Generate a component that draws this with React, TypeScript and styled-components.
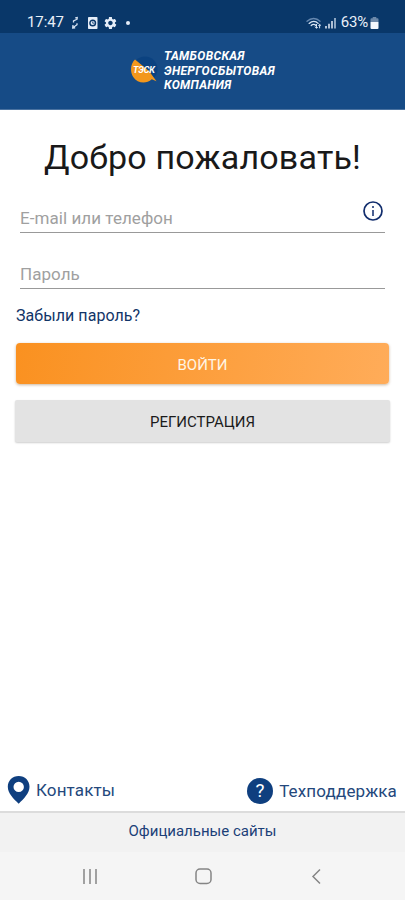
import React from 'react';
import styled, { createGlobalStyle } from 'styled-components';

const GlobalStyle = createGlobalStyle`
  * { box-sizing: border-box; }
  body { margin: 0; background: #fff; font-family: Roboto, "Noto Sans", sans-serif; }
  button, input { font-family: inherit; }
`;

const Screen = styled.div`
  width: 405px;
  height: 900px;
  display: flex;
  flex-direction: column;
  background: #fff;
  overflow: hidden;
`;

const StatusBar = styled.div`
  height: 33px;
  flex: none;
  display: flex;
  justify-content: space-between;
  padding: 11px 26px 0 27px;
  background: #093769;
  color: #e9f0f8;
`;

const StatusGroup = styled.div`
  display: flex;
  height: 23px;
  align-items: center;
`;

const StatusText = styled.span<{ $spacing: number }>`
  font-size: 15px;
  line-height: 23px;
  letter-spacing: ${(p) => p.$spacing}px;
`;

const Spacer = styled.span<{ $width: number }>`
  width: ${(p) => p.$width}px;
  flex: none;
`;

const Header = styled.header`
  height: 77px;
  flex: none;
  display: flex;
  align-items: flex-start;
  padding: 16px 0 0 130px;
  background: #164b86;
  border-bottom: 1px solid #4a72a0;
`;

const Logo = styled.svg`
  width: 30px;
  height: 30px;
  margin: 6px 4px 0 0;
  flex: none;
`;

const CompanyName = styled.div`
  color: #fff;
  font-size: 12px;
  font-weight: 700;
  font-style: italic;
  line-height: 14.7px;
  letter-spacing: 0.34px;
  white-space: nowrap;
`;

const Main = styled.main`
  flex: 1;
  display: flex;
  flex-direction: column;
  padding: 25px 15px 0;
`;

const Title = styled.h1`
  margin: 0 0 1px;
  height: 44px;
  line-height: 44px;
  font-size: 34px;
  font-weight: 400;
  letter-spacing: 0.19px;
  text-align: center;
  color: #191919;
  white-space: nowrap;
`;

const Field = styled.label<{ $height: number }>`
  display: flex;
  align-items: flex-end;
  justify-content: space-between;
  height: ${(p) => p.$height}px;
  margin: 0 5px;
  padding: 0 2px 2px 0;
  border-bottom: 1px solid #999;

  svg { margin-bottom: 9px; flex: none; }
`;

const Input = styled.input`
  flex: 1;
  min-width: 0;
  height: 24px;
  padding: 0;
  border: 0;
  outline: 0;
  background: transparent;
  font-size: 17px;
  letter-spacing: 0.06px;

  &::placeholder { color: #a0a0a0; opacity: 1; }
`;

const ForgotLink = styled.a`
  margin: 15px 0 0 1px;
  height: 24px;
  line-height: 24px;
  font-size: 16px;
  letter-spacing: 0.06px;
  color: #123568;
`;

const LoginButton = styled.button`
  height: 41px;
  margin: 15px 1px 0;
  padding: 2px 0 0;
  border: 0;
  border-radius: 4px;
  background: linear-gradient(100deg, #fa9120, #ffac59);
  box-shadow: 0 1px 3px rgba(120, 70, 10, 0.4);
  color: #fff5e5;
  font-size: 15px;
`;

const RegisterButton = styled.button`
  height: 42px;
  margin-top: 16px;
  padding: 1px 0 0;
  border: 0;
  border-radius: 2px;
  background: #e3e3e3;
  box-shadow: 0 1px 2px rgba(0, 0, 0, 0.2);
  color: #1b1b1b;
  font-size: 15px;
`;

const SupportRow = styled.div`
  flex: none;
  height: 43px;
  display: flex;
  align-items: center;
  justify-content: space-between;
  padding: 0 8px 0 7px;
`;

const SupportLink = styled.a<{ $drop?: number }>`
  display: flex;
  align-items: center;
  gap: 6px;
  padding-top: ${(p) => p.$drop ?? 0}px;
  font-size: 17px;
  line-height: 24px;
  letter-spacing: 0.13px;
  color: #24487c;
`;

const HelpBadge = styled.span`
  display: flex;
  align-items: center;
  justify-content: center;
  width: 26px;
  height: 26px;
  border-radius: 50%;
  background: #0f3f7f;
  color: #fff;
  font-size: 19px;
  line-height: 26px;
`;

const SitesBar = styled.div`
  flex: none;
  height: 41px;
  border-top: 2px solid #dcdcdc;
  background: #f2f2f2;
  color: #1b3f78;
  font-size: 15px;
  line-height: 37px;
  text-align: center;
`;

const NavBar = styled.nav`
  flex: none;
  height: 48px;
  display: flex;
  align-items: center;
  justify-content: space-between;
  padding: 0 79px 0 80px;
  background: #f5f5f5;
`;

const NotificationIcons = () => (
  <svg width="70" height="16" viewBox="0 0 70 16" fill="none">
    <path d="M3.5 7.5V6l3-1.5M5.2 2.8l2-.3-.2 2.2M7 8.2v1.5l-3.5 2.5M3 10l-.3 3 2.5-.2" stroke="#d7e3f2" strokeWidth="1.3" />
    <rect x="18" y="2" width="9.5" height="12" rx=".8" fill="#e5edf8" />
    <circle cx="22.7" cy="8" r="2.8" stroke="#093769" strokeWidth="1.4" />
    <path d="M22.7 6.5v1.7h1.8" stroke="#093769" strokeWidth=".8" />
    <g transform="translate(33 .6) scale(.62)">
      <path
        fill="#e5edf8"
        d="M19.14 12.94c.04-.3.06-.61.06-.94 0-.32-.02-.64-.07-.94l2.03-1.58a.49.49 0 0 0 .12-.61l-1.92-3.32a.488.488 0 0 0-.59-.22l-2.39.96c-.5-.38-1.03-.7-1.62-.94l-.36-2.54a.484.484 0 0 0-.48-.41h-3.84c-.24 0-.43.17-.47.41l-.36 2.54c-.59.24-1.13.57-1.62.94l-2.39-.96c-.22-.08-.47 0-.59.22L2.74 8.87c-.12.21-.08.47.12.61l2.03 1.58c-.05.3-.09.63-.09.94s.02.64.07.94l-2.03 1.58a.49.49 0 0 0-.12.61l1.92 3.32c.12.22.37.29.59.22l2.39-.96c.5.38 1.03.7 1.62.94l.36 2.54c.05.24.24.41.48.41h3.84c.24 0 .44-.17.47-.41l.36-2.54c.59-.24 1.13-.56 1.62-.94l2.39.96c.22.08.47 0 .59-.22l1.92-3.32c.12-.22.07-.47-.12-.61zM12 15.6c-1.98 0-3.6-1.62-3.6-3.6s1.62-3.6 3.6-3.6 3.6 1.62 3.6 3.6-1.62 3.6-3.6 3.6"
      />
    </g>
    <circle cx="58" cy="8" r="2" fill="#e5edf8" />
  </svg>
);

const ConnectionIcons = () => (
  <svg width="32" height="16" viewBox="0 0 32 16" fill="none">
    <g strokeWidth="1.3" strokeLinecap="round">
      <path d="M1 6.2c4-3.6 9.4-3.6 13 0" stroke="#6688b0" />
      <path d="M3.1 8.4c2.9-2.6 6.6-2.6 9 0M5.2 10.5c1.4-1.5 3.5-1.5 4.7 0" stroke="#d7e3f2" />
    </g>
    <path d="M10.5 9v4M9 11.7l1.5 1.7 1.2-1.4M13.6 13.3V9.5M12.3 10.7l1.3-1.4 1.4 1.4" stroke="#d7e3f2" />
    <path d="M20 11v2.5M23 8.7v4.8M26 6v7.5" stroke="#e5edf8" strokeWidth="1.5" />
    <path d="M29 3v10.5" stroke="#b9cce1" strokeWidth="1.5" />
  </svg>
);

const BatteryIcon = () => (
  <svg width="9" height="14" viewBox="0 0 9 14">
    <path d="M.5 6V3.2q0-1 1-1h1.2V1h3.6v1.2h1.2q1 0 1 1V6z" fill="#6d89aa" />
    <path d="M.5 6h8v6q0 1-1 1h-6q-1 0-1-1z" fill="#f3f7fd" />
  </svg>
);

const CompanyLogo = () => (
  <Logo viewBox="0 0 30 30">
    <circle cx="15" cy="14" r="12.5" fill="#0b4280" />
    <path d="M5 4.5C.2 9 0 17 3.2 22c4.300 6.300 12.800 7.500 18.600 2.300l4.700 1.900L19 16 5 4.500z" fill="#f3971c" />
    <text x="3" y="17.5" fill="#fff" fontFamily="Roboto, sans-serif" fontSize="9" fontWeight="700" fontStyle="italic" textLength="22">
      ТЭСК
    </text>
  </Logo>
);

const InfoIcon = () => (
  <svg width="20" height="20" viewBox="0 0 20 20" fill="none" stroke="#112d6d">
    <circle cx="10" cy="10" r="9" strokeWidth="1.7" />
    <path d="M10 9v6M10 5v2" strokeWidth="1.5" />
  </svg>
);

const PinIcon = () => (
  <svg width="23" height="28" viewBox="0 0 23 28">
    <path
      fill="#0f3f7f"
      fillRule="evenodd"
      d="M11.7 0C5.4 0 .8 4.7.8 10.8c0 6.5 5.8 12 10.9 17 5-5 10.8-10.5 10.8-17C22.5 4.7 18 0 11.7 0zm0 5.7a5.2 5.2 0 1 1 0 10.4 5.2 5.2 0 0 1 0-10.4z"
    />
  </svg>
);

export default function App() {
  return (
    <>
      <GlobalStyle />
      <Screen>
        <StatusBar>
          <StatusGroup>
            <StatusText $spacing={-0.1}>17:47</StatusText>
            <Spacer $width={6} />
            <NotificationIcons />
          </StatusGroup>
          <StatusGroup>
            <ConnectionIcons />
            <Spacer $width={3} />
            <StatusText $spacing={-0.2}>63%</StatusText>
            <Spacer $width={2} />
            <BatteryIcon />
          </StatusGroup>
        </StatusBar>
        <Header>
          <CompanyLogo />
          <CompanyName>
            ТАМБОВСКАЯ<br />ЭНЕРГОСБЫТОВАЯ<br />КОМПАНИЯ
          </CompanyName>
        </Header>
        <Main>
          <Title>Добро пожаловать!</Title>
          <Field $height={53}>
            <Input type="text" placeholder="E-mail или телефон" />
            <InfoIcon />
          </Field>
          <Field $height={56}>
            <Input type="password" placeholder="Пароль" />
          </Field>
          <ForgotLink>Забыли пароль?</ForgotLink>
          <LoginButton>ВОЙТИ</LoginButton>
          <RegisterButton>РЕГИСТРАЦИЯ</RegisterButton>
        </Main>
        <SupportRow>
          <SupportLink>
            <PinIcon />
            Контакты
          </SupportLink>
          <SupportLink $drop={2}>
            <HelpBadge>?</HelpBadge>
            Техподдержка
          </SupportLink>
        </SupportRow>
        <SitesBar>Официальные сайты</SitesBar>
        <NavBar>
          <svg width="20" height="20" viewBox="0 0 20 20" stroke="#858585" strokeWidth="1.5">
            <path d="M4 3v15M10 3v15M16 3v15" />
          </svg>
          <svg width="20" height="20" viewBox="0 0 20 20" fill="none" stroke="#858585" strokeWidth="1.5">
            <rect x="3" y="3" width="15" height="14.5" rx="4" />
          </svg>
          <svg width="20" height="20" viewBox="0 0 20 20" fill="none" stroke="#858585" strokeWidth="1.5">
            <path d="m14 3.5-7 7 7 7" />
          </svg>
        </NavBar>
      </Screen>
    </>
  );
}
